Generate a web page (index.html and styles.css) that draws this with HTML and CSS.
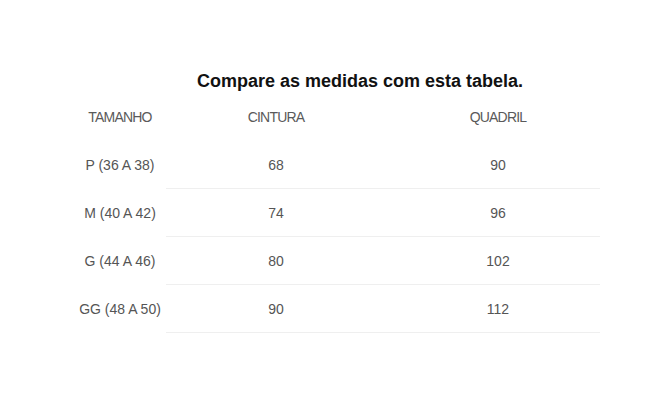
FILE: index.html
```html
<!DOCTYPE html>
<html lang="pt">
<head>
<meta charset="utf-8">
<link rel="stylesheet" href="styles.css">
</head>
<body>
<div class="wrap">
  <h2 class="title">Compare as medidas com esta tabela.</h2>
  <table class="sizes">
    <thead>
      <tr><th class="c1">TAMANHO</th><th class="c2">CINTURA</th><th class="c3">QUADRIL</th></tr>
    </thead>
    <tbody>
      <tr><th class="c1">P (36 A 38)</th><td class="c2">68</td><td class="c3">90</td></tr>
      <tr><th class="c1">M (40 A 42)</th><td class="c2">74</td><td class="c3">96</td></tr>
      <tr><th class="c1">G (44 A 46)</th><td class="c2">80</td><td class="c3">102</td></tr>
      <tr><th class="c1">GG (48 A 50)</th><td class="c2">90</td><td class="c3">112</td></tr>
    </tbody>
  </table>
</div>
</body>
</html>
```
FILE: styles.css
```css
html, body {
  margin: 0;
  padding: 0;
  background: #fff;
}
body {
  font-family: "Liberation Sans", Arial, sans-serif;
}
.wrap {
  margin-left: 74px;
  width: 572px;
  padding-top: 71px;
}
.title {
  margin: 0;
  height: 22px;
  line-height: 21px;
  font-size: 18px;
  font-weight: bold;
  color: #111;
  text-align: center;
}
.sizes {
  border-collapse: collapse;
  border-spacing: 0;
  table-layout: fixed;
  width: 526px;
}
.sizes th, .sizes td {
  padding: 0;
  height: 47px;
  font-size: 14px;
  font-weight: normal;
  color: #555;
  text-align: center;
  vertical-align: middle;
}
.sizes thead th {
  height: 48px;
  font-size: 14px;
  letter-spacing: -0.8px;
  color: #5a5a5a;
}
.c1 { width: 92px; }
.c2 { width: 220px; }
.c3 { width: 204px; }
.sizes td.c3, .sizes thead .c3 { padding-left: 10px; }
.sizes tbody td {
  border-bottom: 1px solid #efefef;
}
```
